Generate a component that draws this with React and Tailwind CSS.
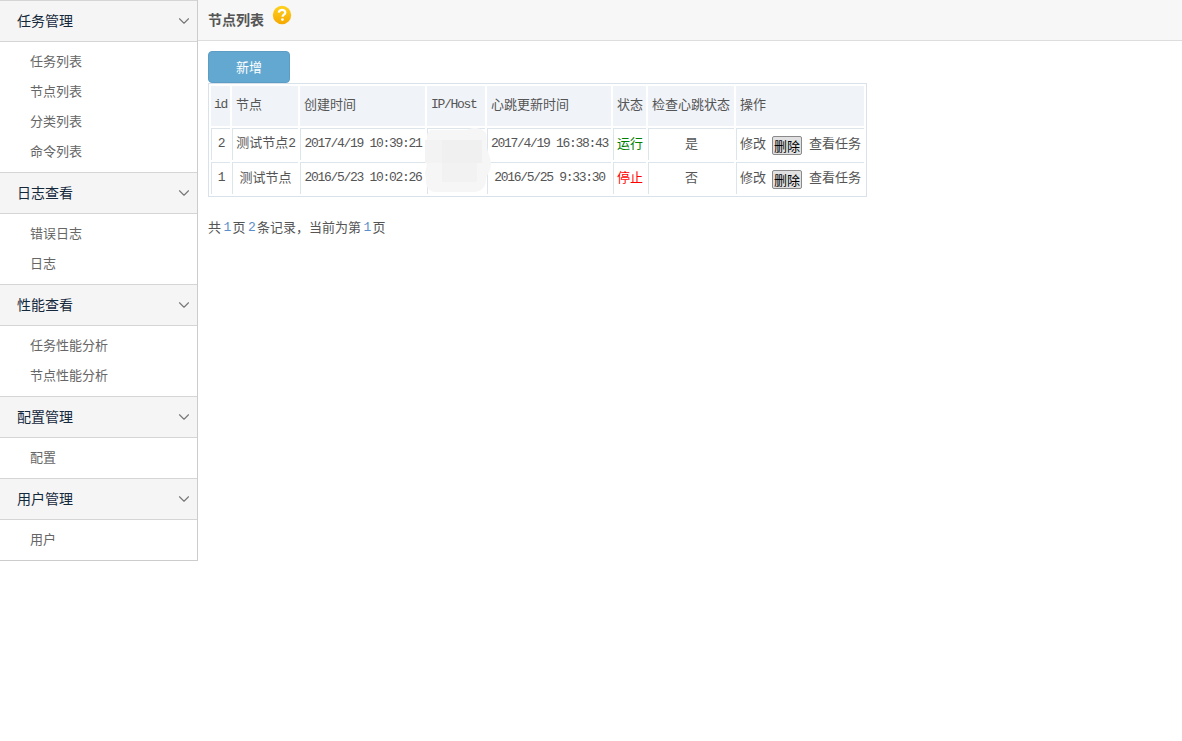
import { ChevronDown } from "lucide-react";

const menu = [
  { title: "任务管理", items: ["任务列表", "节点列表", "分类列表", "命令列表"] },
  { title: "日志查看", items: ["错误日志", "日志"] },
  { title: "性能查看", items: ["任务性能分析", "节点性能分析"] },
  { title: "配置管理", items: ["配置"] },
  { title: "用户管理", items: ["用户"] },
];

const nodes = [
  { id: "2", name: "测试节点", suffix: "2", created: "2017/4/19 10:39:21", beat: "2017/4/19 16:38:43", running: true, check: "是" },
  { id: "1", name: "测试节点", suffix: "", created: "2016/5/23 10:02:26", beat: "2016/5/25 9:33:30", running: false, check: "否" },
];

const heads = [
  { label: <Mono>id</Mono>, width: "w-[19px]", center: true },
  { label: "节点", width: "w-[66px]" },
  { label: "创建时间", width: "w-[125px]" },
  { label: <Mono>IP/Host</Mono>, width: "w-[58px]" },
  { label: "心跳更新时间", width: "w-[124px]" },
  { label: "状态", width: "w-[33px]" },
  { label: "检查心跳状态", width: "w-[86px]" },
  { label: "操作", width: "w-[128px]" },
];

function Mono({ children }) {
  return <span className="font-['Liberation_Mono',monospace] tracking-[-1.3px]">{children}</span>;
}

function Sidebar() {
  return (
    <div className="w-[198px] shrink-0 border-r border-b border-[#ccc] bg-white">
      {menu.map((group) => (
        <div key={group.title}>
          <div className="flex h-[42px] items-center justify-between border-y border-[#d5d5d5] bg-[#f5f5f5] pl-[17px] pr-1">
            <span className="pb-0.5 text-[14px] text-[#14283c]">{group.title}</span>
            <ChevronDown className="text-[#777]" size={18} strokeWidth={1.5} />
          </div>
          <div className="pt-1 pb-[6px]">
            {group.items.map((item) => (
              <div key={item} className="flex h-[30px] items-center pl-[30px] text-[13px] text-[#666]">
                {item}
              </div>
            ))}
          </div>
        </div>
      ))}
    </div>
  );
}

function HelpIcon() {
  return (
    <svg width="20" height="20" viewBox="0 0 20 20" className="ml-2 mb-[10px]">
      <defs>
        <linearGradient id="help" x1="0" y1="0" x2="0" y2="1">
          <stop offset="0" stopColor="#ffd21f" />
          <stop offset="1" stopColor="#f5a800" />
        </linearGradient>
      </defs>
      <circle cx="10" cy="10" r="9.2" fill="url(#help)" />
      <path d="M6.8 7.6c.3-1.9 1.6-2.8 3.3-2.8 1.9 0 3.2 1.1 3.2 2.6 0 2.3-2.8 2.3-2.8 4.4" fill="none" stroke="#fff" strokeWidth="2.2" />
      <circle cx="10.4" cy="14.6" r="1.4" fill="#fff" />
    </svg>
  );
}

// smudge that hides the IP column in the screenshot
function Smudge() {
  return (
    <svg width="68" height="66" viewBox="0 0 68 66" className="absolute left-[226px] top-[86px]">
      <path d="M7 3h36c4-3 14-3 18 2 3 4 1 8 2 14 0 6 4 12 4 18 0 8-5 11-5 16 0 8-6 12-12 12H12C5 65 2 60 2 54c0-5-2-8 0-12 1-3 1-7-1-12 0-3 0-5 1-8 0-3 0-6 1-12 0-4 2-7 4-7z" fill="#f6f6f6" />
      <rect x="1" y="13" width="17" height="23" fill="#f2f3f2" />
      <rect x="18" y="13" width="40" height="23" fill="#eff0ef" />
      <rect x="18" y="36" width="35" height="19" fill="#f1f2f1" />
    </svg>
  );
}

function Content() {
  return (
    <div className="relative px-[10px] pt-[10px] text-[13px] text-[#555]">
      <button className="block h-8 w-[82px] rounded border border-[#5c9cc5] bg-[#62a8d1] text-[13px] text-white">
        新增
      </button>
      <table className="table-fixed border-separate border-spacing-[2px] border border-[#d9e2ea]">
        <thead>
          <tr>
            {heads.map((head, index) => (
              <th
                key={index}
                className={`h-10 bg-[#f0f3f8] pb-1 font-normal ${head.width} ${head.center ? "text-center" : "pl-1 text-left"}`}
              >
                {head.label}
              </th>
            ))}
          </tr>
        </thead>
        <tbody>
          {nodes.map((node) => (
            <tr key={node.id} className="text-center">
              <td className="h-8 border-t border-l border-[#dce4ec] pb-1"><Mono>{node.id}</Mono></td>
              <td className="border-t border-l border-[#dce4ec] pb-1">
                {node.name}
                {node.suffix && <Mono>{node.suffix}</Mono>}
              </td>
              <td className="border-t border-l border-[#dce4ec] pb-1"><Mono>{node.created}</Mono></td>
              <td className="border-t border-l border-[#dce4ec] pb-1"></td>
              <td className="border-t border-l border-[#dce4ec] pb-1"><Mono>{node.beat}</Mono></td>
              <td className={`border-t border-l border-[#dce4ec] pb-1 ${node.running ? "text-[#008000]" : "text-[#ff0000]"}`}>
                {node.running ? "运行" : "停止"}
              </td>
              <td className="border-t border-l border-[#dce4ec] pb-1">{node.check}</td>
              <td className="border-t border-l border-[#dce4ec] pb-1 pl-[3px] text-left">
                <div className="flex items-center">
                  <span>修改</span>
                  <button className="ml-[6px] mt-[5px] h-[19px] w-[30px] rounded-[2px] border border-[#8a8a8a] bg-[#e1e1e1] text-[13px] leading-none text-black">
                    删除
                  </button>
                  <span className="ml-[7px]">查看任务</span>
                </div>
              </td>
            </tr>
          ))}
        </tbody>
      </table>
      <Smudge />
      <div className="mt-[19px] flex items-center">
        共<Page>1</Page>页<Page>2</Page>条记录，当前为第<Page>1</Page>页
      </div>
    </div>
  );
}

function Page({ children }) {
  return (
    <span className="mx-[2.5px] text-[#5b8fc9]">
      <Mono>{children}</Mono>
    </span>
  );
}

export default function App() {
  return (
    <div className="flex items-start bg-white font-['Noto_Sans_CJK_SC',sans-serif]">
      <Sidebar />
      <div className="min-w-0 flex-1">
        <div className="flex h-[41px] items-center border-b border-[#ddd] bg-[#f7f7f7] pl-[10px]">
          <span className="pb-0.5 text-[14px] font-bold text-[#555]">节点列表</span>
          <HelpIcon />
        </div>
        <Content />
      </div>
    </div>
  );
}
